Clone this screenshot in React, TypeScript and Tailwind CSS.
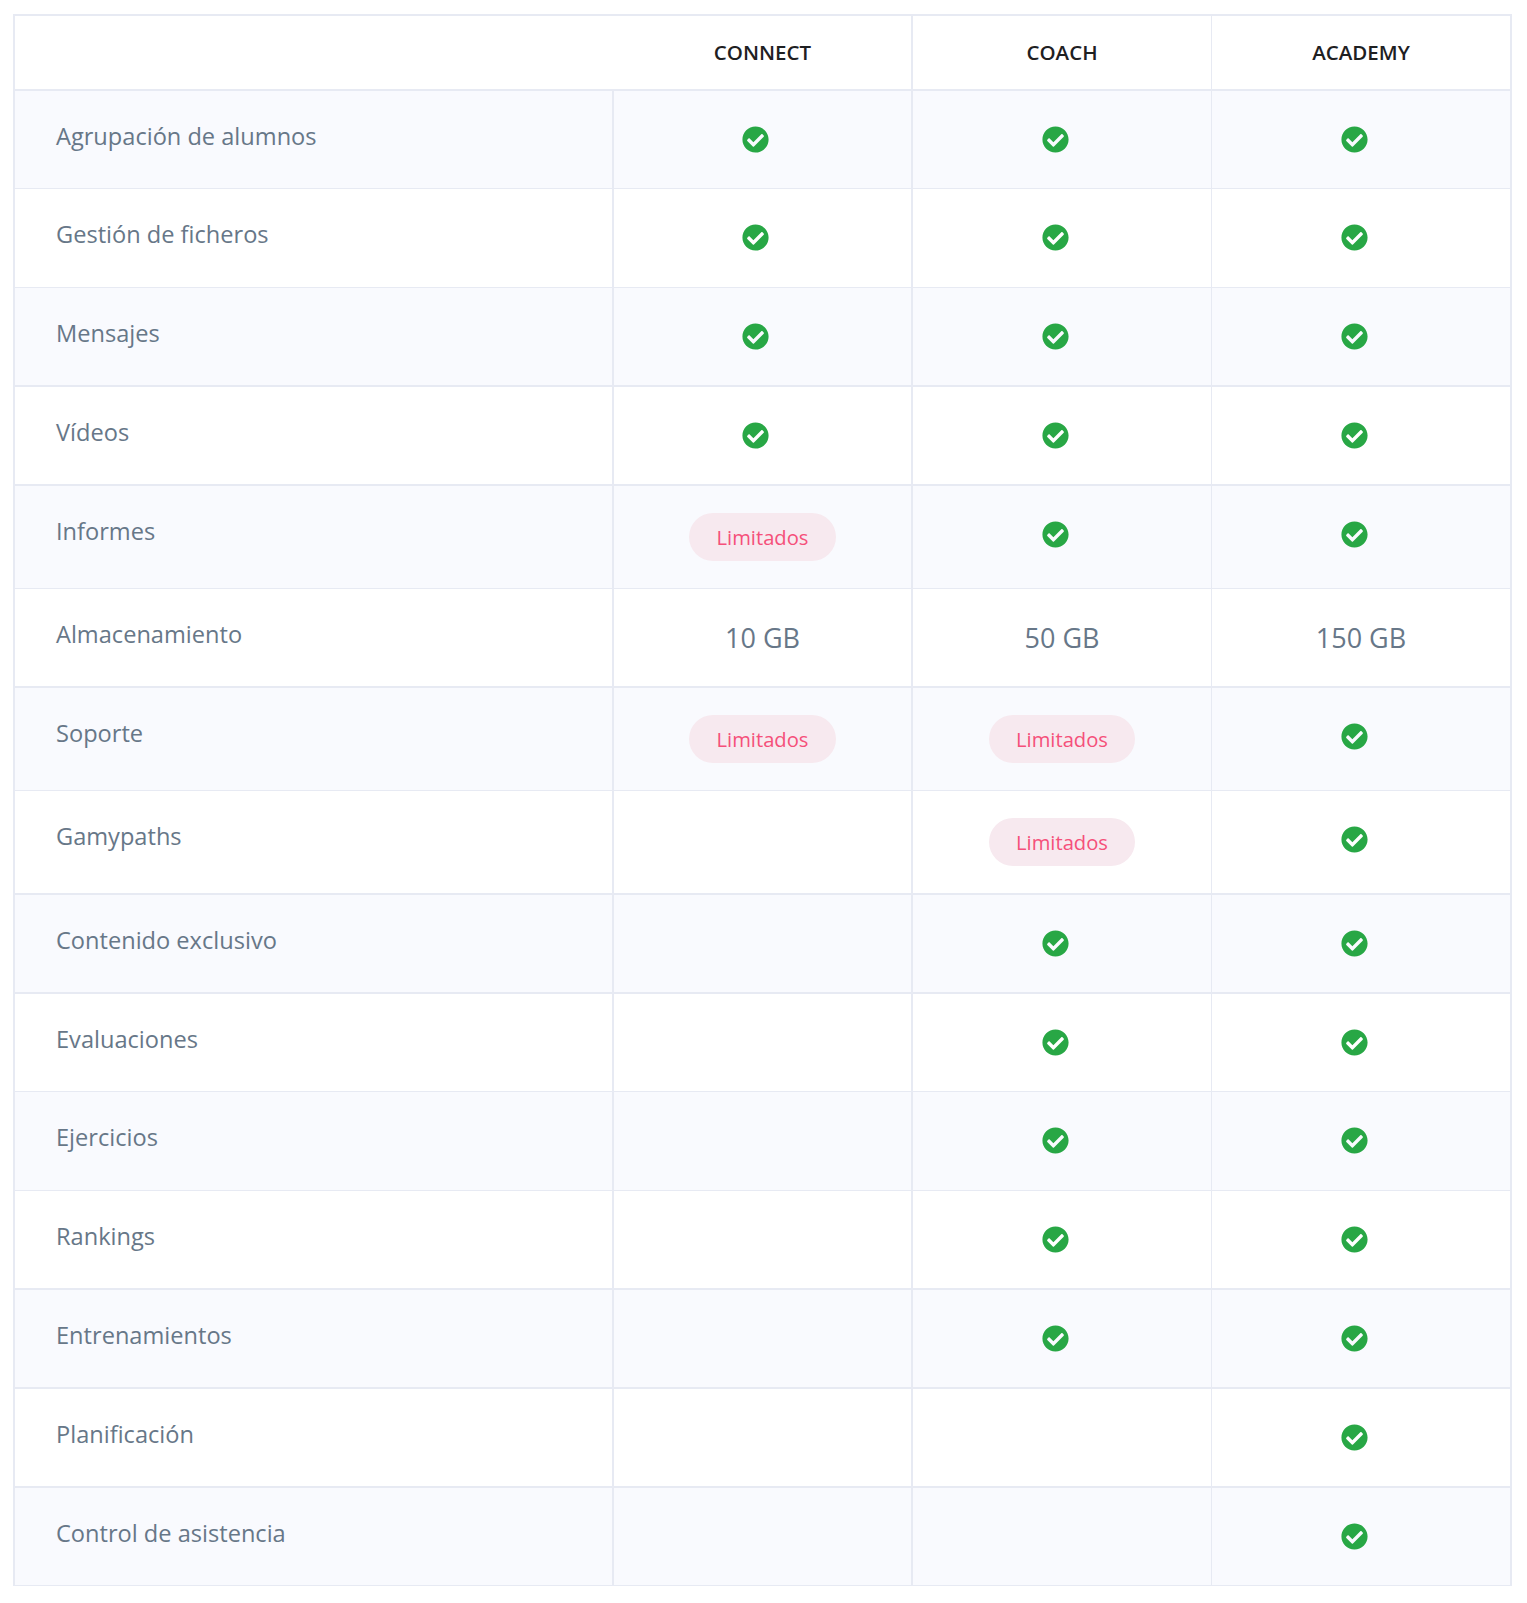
import { FaCheckCircle } from "react-icons/fa";

type Cell = "check" | "limited" | "" | string;

const rows: { label: string; cells: Cell[]; row: string }[] = [
  { label: "Agrupación de alumnos", cells: ["check", "check", "check"], row: "h-[98px] border-b bg-[#f9fafe]" },
  { label: "Gestión de ficheros", cells: ["check", "check", "check"], row: "h-[99px] border-b bg-white" },
  { label: "Mensajes", cells: ["check", "check", "check"], row: "h-[99px] border-b-2 bg-[#f9fafe]" },
  { label: "Vídeos", cells: ["check", "check", "check"], row: "h-[99px] border-b-2 bg-white" },
  { label: "Informes", cells: ["limited", "check", "check"], row: "h-[103px] border-b bg-[#f9fafe]" },
  { label: "Almacenamiento", cells: ["10 GB", "50 GB", "150 GB"], row: "h-[99px] border-b-2 bg-white" },
  { label: "Soporte", cells: ["limited", "limited", "check"], row: "h-[103px] border-b bg-[#f9fafe]" },
  { label: "Gamypaths", cells: ["", "limited", "check"], row: "h-[104px] border-b-2 bg-white" },
  { label: "Contenido exclusivo", cells: ["", "check", "check"], row: "h-[99px] border-b-2 bg-[#f9fafe]" },
  { label: "Evaluaciones", cells: ["", "check", "check"], row: "h-[98px] border-b bg-white" },
  { label: "Ejercicios", cells: ["", "check", "check"], row: "h-[99px] border-b bg-[#f9fafe]" },
  { label: "Rankings", cells: ["", "check", "check"], row: "h-[99px] border-b-2 bg-white" },
  { label: "Entrenamientos", cells: ["", "check", "check"], row: "h-[99px] border-b-2 bg-[#f9fafe]" },
  { label: "Planificación", cells: ["", "", "check"], row: "h-[99px] border-b-2 bg-white" },
  { label: "Control de asistencia", cells: ["", "", "check"], row: "h-[98px] border-b bg-[#f9fafe]" },
];

const plans = ["CONNECT", "COACH", "ACADEMY"];

const gridCols = "grid grid-cols-[599px_299px_299px_1fr] border-[#e7eaf3]";
const planBorder = ["border-r-2", "border-r", ""];

function PlanCell({ value }: { value: Cell }) {
  if (value === "") return null;
  if (value === "check") {
    return (
      <div className="flex justify-center pt-[35px] pr-[14px]">
        <FaCheckCircle className="text-[27px] text-[#28a745]" />
      </div>
    );
  }
  if (value === "limited") {
    return (
      <div className="flex justify-center pt-[27px]">
        <span className="flex h-[48px] w-[146.5px] items-center justify-center rounded-full bg-[#f7e9ef] pt-[1px] text-[20.2px] text-[#f5507a]">
          Limitados
        </span>
      </div>
    );
  }
  return <div className="pt-[29px] text-center text-[27px] leading-[40px] text-[#677788]">{value}</div>;
}

export default function App() {
  return (
    <div className="min-h-[1603px] bg-white pt-[14px] pl-[13px] font-['Open_Sans',sans-serif]">
      <div className="w-[1499px] border-x-2 border-t-2 border-[#e7eaf3]">
        <div className={`${gridCols} h-[75px] border-b-2`}>
          <div />
          {plans.map((plan, i) => (
            <div
              key={plan}
              className={`${planBorder[i]} border-[#e7eaf3] pt-[21px] text-center text-[20.5px] leading-[30px] font-[560] text-[#1e2022]`}
            >
              {plan}
            </div>
          ))}
        </div>
        {rows.map((r) => (
          <div key={r.label} className={`${gridCols} ${r.row}`}>
            <div className="border-r-2 border-[#e7eaf3] pt-[27px] pl-[41px] text-[23.6px] leading-[36px] text-[#677788]">
              {r.label}
            </div>
            {r.cells.map((c, i) => (
              <div key={i} className={`${planBorder[i]} border-[#e7eaf3]`}>
                <PlanCell value={c} />
              </div>
            ))}
          </div>
        ))}
      </div>
    </div>
  );
}
